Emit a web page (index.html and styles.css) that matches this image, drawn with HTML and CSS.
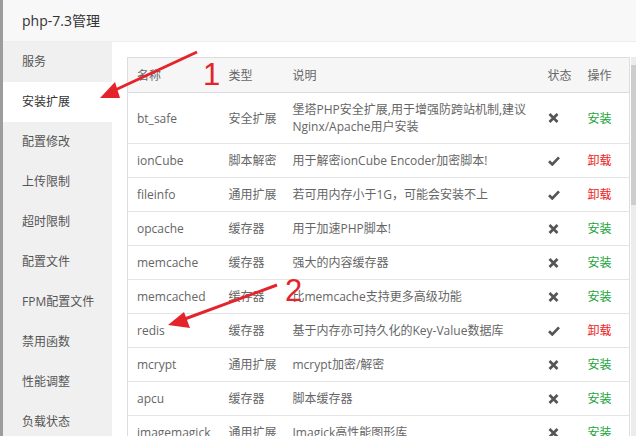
FILE: index.html
```html
<!DOCTYPE html>
<html lang="zh-CN">
<head>
  <meta charset="UTF-8" />
  <title>php-7.3管理</title>
  <link rel="stylesheet" href="styles.css">
</head>
<body>

<div class="page">
  <div class="dialog">
    <div class="dialog-title">php-7.3管理</div>

    <div class="dialog-body">
      <!-- Left menu -->
      <ul class="side-menu">
        <li>服务</li>
        <li class="active">安装扩展</li>
        <li>配置修改</li>
        <li>上传限制</li>
        <li>超时限制</li>
        <li>配置文件</li>
        <li>FPM配置文件</li>
        <li>禁用函数</li>
        <li>性能调整</li>
        <li>负载状态</li>
      </ul>

      <!-- Extension list -->
      <div class="main">
        <div class="table-wrap">
          <table class="ext-table">
            <colgroup>
              <col style="width:92px">
              <col style="width:64px">
              <col style="width:255px">
              <col style="width:40px">
              <col>
            </colgroup>
            <thead>
              <tr><th>名称</th><th>类型</th><th>说明</th><th>状态</th><th>操作</th></tr>
            </thead>
            <tbody id="extRows"></tbody>
          </table>
        </div>
        <div class="scrollbar"><div class="thumb"></div></div>
      </div>
    </div>
  </div>

  <!-- Red annotation arrows -->
  <svg class="annotations" width="636" height="436" viewBox="0 0 636 436">
    <line x1="197" y1="52" x2="113" y2="91" />
    <polygon points="100,98 120,98 115,82" />
    <text x="203" y="85">1</text>
    <line x1="277" y1="285" x2="182" y2="320" />
    <polygon points="168,325 190,328 184,312" />
    <text x="285" y="301">2</text>
  </svg>
</div>

<script>
  const extensions = [
    { name: 'bt_safe', type: '安全扩展', desc: '堡塔PHP安全扩展,用于增强防跨站机制,建议Nginx/Apache用户安装', installed: false },
    { name: 'ionCube', type: '脚本解密', desc: '用于解密ionCube Encoder加密脚本!', installed: true },
    { name: 'fileinfo', type: '通用扩展', desc: '若可用内存小于1G，可能会安装不上', installed: true },
    { name: 'opcache', type: '缓存器', desc: '用于加速PHP脚本!', installed: false },
    { name: 'memcache', type: '缓存器', desc: '强大的内容缓存器', installed: false },
    { name: 'memcached', type: '缓存器', desc: '比memcache支持更多高级功能', installed: false },
    { name: 'redis', type: '缓存器', desc: '基于内存亦可持久化的Key-Value数据库', installed: true },
    { name: 'mcrypt', type: '通用扩展', desc: 'mcrypt加密/解密', installed: false },
    { name: 'apcu', type: '缓存器', desc: '脚本缓存器', installed: false },
    { name: 'imagemagick', type: '通用扩展', desc: 'Imagick高性能图形库', installed: false }
  ];

  const iconOk = '<svg class="state-icon" width="12" height="10" viewBox="0 0 12 10"><polyline points="1,5.2 4.3,8.4 11,1.4" /></svg>';
  const iconNo = '<svg class="state-icon" width="11" height="10" viewBox="0 0 11 10"><path d="M1.5 1 L9.5 9 M9.5 1 L1.5 9" /></svg>';

  const tbody = document.getElementById('extRows');
  extensions.forEach(ext => {
    const tr = document.createElement('tr');
    tr.innerHTML = `
      <td>${ext.name}</td>
      <td class="type">${ext.type}</td>
      <td>${ext.desc}</td>
      <td>${ext.installed ? iconOk : iconNo}</td>
      <td>${ext.installed
        ? '<a class="btn-uninstall">卸载</a>'
        : '<a class="btn-install">安装</a>'}</td>
    `;
    tbody.appendChild(tr);
  });
</script>
</body>
</html>
```

FILE: styles.css
```css
/* Base */
* { margin: 0; padding: 0; box-sizing: border-box; }
body {
  width: 636px;
  height: 436px;
  overflow: hidden;
  background: #9c9c9c;
  font-family: "Open Sans", "Noto Sans CJK SC", sans-serif;
}

.page {
  position: relative;
  height: 436px;
  padding-left: 3px;
  display: flex;
}

/* Dialog */
.dialog {
  flex: 1;
  display: flex;
  flex-direction: column;
  background: #fff;
  overflow: hidden;
}

.dialog-title {
  height: 42px;
  line-height: 41px;
  padding-left: 19px;
  background: #f8f8f8;
  border-bottom: 1px solid #eee;
  font-size: 14px;
  color: #333;
}

.dialog-body {
  flex: 1;
  display: flex;
  min-height: 0;
}

/* Side menu */
.side-menu {
  list-style: none;
  width: 109px;
  background: #f0f0f0;
}

.side-menu li {
  height: 40px;
  line-height: 40px;
  padding-left: 19px;
  font-size: 12px;
  color: #555;
  white-space: nowrap;
}

.side-menu li.active {
  background: #fff;
  color: #333;
}

/* Main area */
.main {
  flex: 1;
  display: flex;
  gap: 1px;
  padding: 15px 0 0 15px;
  min-width: 0;
}

.table-wrap {
  flex: 1;
  min-width: 0;
}

.ext-table {
  width: 100%;
  table-layout: fixed;
  border-collapse: collapse;
  border: 1px solid #ddd;
  font-size: 12px;
  color: #666;
}

.ext-table th {
  padding: 9px 4px 8px 9px;
  line-height: 17px;
  background: #f6f6f6;
  border-bottom: 1px solid #ddd;
  font-weight: normal;
  text-align: left;
  white-space: nowrap;
}

.ext-table td {
  padding: 8px 4px 8px 9px;
  line-height: 17px;
  border-top: 1px solid #e4e4e4;
  vertical-align: middle;
}

.ext-table td.type { white-space: nowrap; }

.state-icon {
  display: block;
  fill: none;
  stroke: #555;
  stroke-width: 2.7;
}

.btn-install { color: #20a53a; }
.btn-uninstall { color: #ee1c1c; }

/* Scrollbar */
.scrollbar {
  width: 5px;
  align-self: stretch;
  background: #ececec;
  padding-top: 8px;
}

.scrollbar .thumb {
  height: 140px;
  background: #cdcdcd;
}

/* Annotations drawn over the page */
.annotations {
  position: absolute;
  top: 0;
  left: 0;
  pointer-events: none;
}

.annotations line {
  stroke: #e5232b;
  stroke-width: 3;
}

.annotations polygon { fill: #e5232b; }

.annotations text {
  fill: #e5232b;
  font-family: "Liberation Sans", sans-serif;
  font-size: 31px;
}
```
